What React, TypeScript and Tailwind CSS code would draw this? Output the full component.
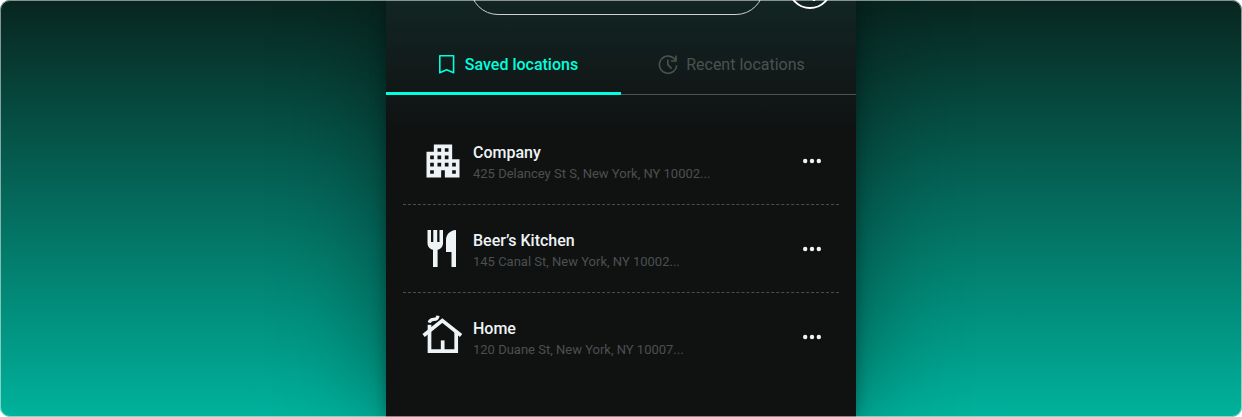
import React, { useState } from "react";
import { MdApartment } from "react-icons/md";

function BookmarkIcon() {
  return (
    <svg viewBox="0 0 24 24" className="size-6" fill="none" stroke="currentColor" strokeWidth="1.6" aria-hidden="true">
      <path d="M4.8 2.8H18.6V19.8L11.7 16.8L4.8 19.8Z" strokeLinejoin="round" />
    </svg>
  );
}

function RecentIcon() {
  return (
    <svg viewBox="0 0 24 24" className="size-6" fill="none" stroke="currentColor" strokeWidth="1.6" aria-hidden="true">
      <path d="M20.600 12.200A8.600 8.600 0 1 1 19.500 7.400" />
      <path d="M20 2.600V8H14.800" />
      <path d="M11.800 6.400V11.600L15.600 15.600" />
    </svg>
  );
}

function CutleryIcon() {
  return (
    <svg viewBox="0 0 44 44" className="size-11" fill="currentColor" aria-hidden="true">
      <path d="M6.5 3H10V15H12.3V3H16.2V15H18.5V3H22V16C22 19.5 19.8 22 16.6 22.8V40H12V22.8C8.7 22 6.5 19.5 6.5 16Z" />
      <path d="M35 3V40H30.5V25H25V13C25 7.500 29 3.400 35 3Z" />
    </svg>
  );
}

function HomeIcon() {
  return (
    <svg viewBox="0 0 44 44" className="size-11" fill="none" stroke="currentColor" strokeWidth="3.7" aria-hidden="true">
      <path d="M2.600 20.500L21.300 5.600L40.100 20.500" />
      <path d="M8.500 17V36.200H35.200V17" />
      <path d="M21.700 36V25.400" />
      <path d="M8.500 17V9.800" />
      <path d="M8.300 7.600C8.800 5 10.600 4.400 13 4.400C15.500 4.400 16.700 3.200 17 .8" strokeWidth="3.2" />
    </svg>
  );
}

const locations = [
  { name: "Company", address: "425 Delancey St S, New York, NY 10002...", icon: <MdApartment className="size-11" aria-hidden="true" /> },
  { name: "Beer’s Kitchen", address: "145 Canal St, New York, NY 10002...", icon: <CutleryIcon /> },
  { name: "Home", address: "120 Duane St, New York, NY 10007...", icon: <HomeIcon /> },
];

export default function App() {
  const [tab, setTab] = useState("saved");
  const active = "border-b-3 border-[#00ffdf] pb-[15px] font-medium text-[#00ffdf]";
  const idle = "border-b border-[#4d5252] pb-[17px] text-[#4a5251]";
  return (
    <div className="relative flex min-h-screen justify-center overflow-hidden rounded-[10px] bg-linear-to-b/srgb from-[#08251f] to-[#00b29c] font-[Roboto,sans-serif]">
      <main className="w-full max-w-[470px] overflow-hidden bg-[#101212] bg-linear-to-b/srgb from-[#122523] to-[#101212] to-[130px] shadow-[0_0_14px_rgba(0,0,0,0.35),0_0_100px_rgba(0,0,0,0.42)]">
        <header className="-mt-[41px] flex items-center gap-6 pr-6 pl-21">
          <input type="search" aria-label="Search" className="h-14 min-w-0 flex-1 rounded-full border border-[#c8d2d0] px-6 text-white outline-none" />
          <button type="button" aria-label="Locate me" className="flex size-11 items-center justify-center rounded-full border-2 border-white text-white">
            <svg viewBox="0 0 28 28" className="size-7 shrink-0" fill="none" stroke="currentColor" strokeWidth="2" aria-hidden="true">
              <path d="M25 3L3 12L14 14L18 28Z" />
            </svg>
          </button>
        </header>
        <div role="tablist" className="grid h-20 grid-cols-2 text-base leading-6">
          <button type="button" role="tab" aria-selected={tab === "saved"} onClick={() => setTab("saved")} className={`flex items-end justify-center gap-1.5 pl-1.5 ${tab === "saved" ? active : idle}`}>
            <BookmarkIcon />
            Saved locations
          </button>
          <button type="button" role="tab" aria-selected={tab === "recent"} onClick={() => setTab("recent")} className={`flex items-end justify-center gap-1.5 pr-4 ${tab === "recent" ? active : idle}`}>
            <RecentIcon />
            Recent locations
          </button>
        </div>
        <ul className="px-[17px] pt-[22px]">
          {locations.map((item) => (
            <li key={item.name} className="flex border-b border-dashed border-[#4a4d4d] pt-[22px] pr-[17px] pb-5 pl-[18px] text-[#eef3f6] last:border-b-0">
              {item.icon}
              <div className="min-w-0 flex-1 pt-[3px] pl-2">
                <h2 className="text-base leading-[22px] font-medium">{item.name}</h2>
                <p className="truncate text-[13px] leading-5 text-[#4c4f50]">{item.address}</p>
              </div>
              <button type="button" aria-label={`More options for ${item.name}`} className="h-11">
                <svg viewBox="0 0 20 20" className="size-5" fill="currentColor" aria-hidden="true">
                  <circle cx="3.200" cy="10" r="2.200" />
                  <circle cx="10" cy="10" r="2.200" />
                  <circle cx="16.800" cy="10" r="2.200" />
                </svg>
              </button>
            </li>
          ))}
        </ul>
      </main>
      <div className="pointer-events-none absolute inset-0 rounded-[10px] border border-white/50" />
    </div>
  );
}
